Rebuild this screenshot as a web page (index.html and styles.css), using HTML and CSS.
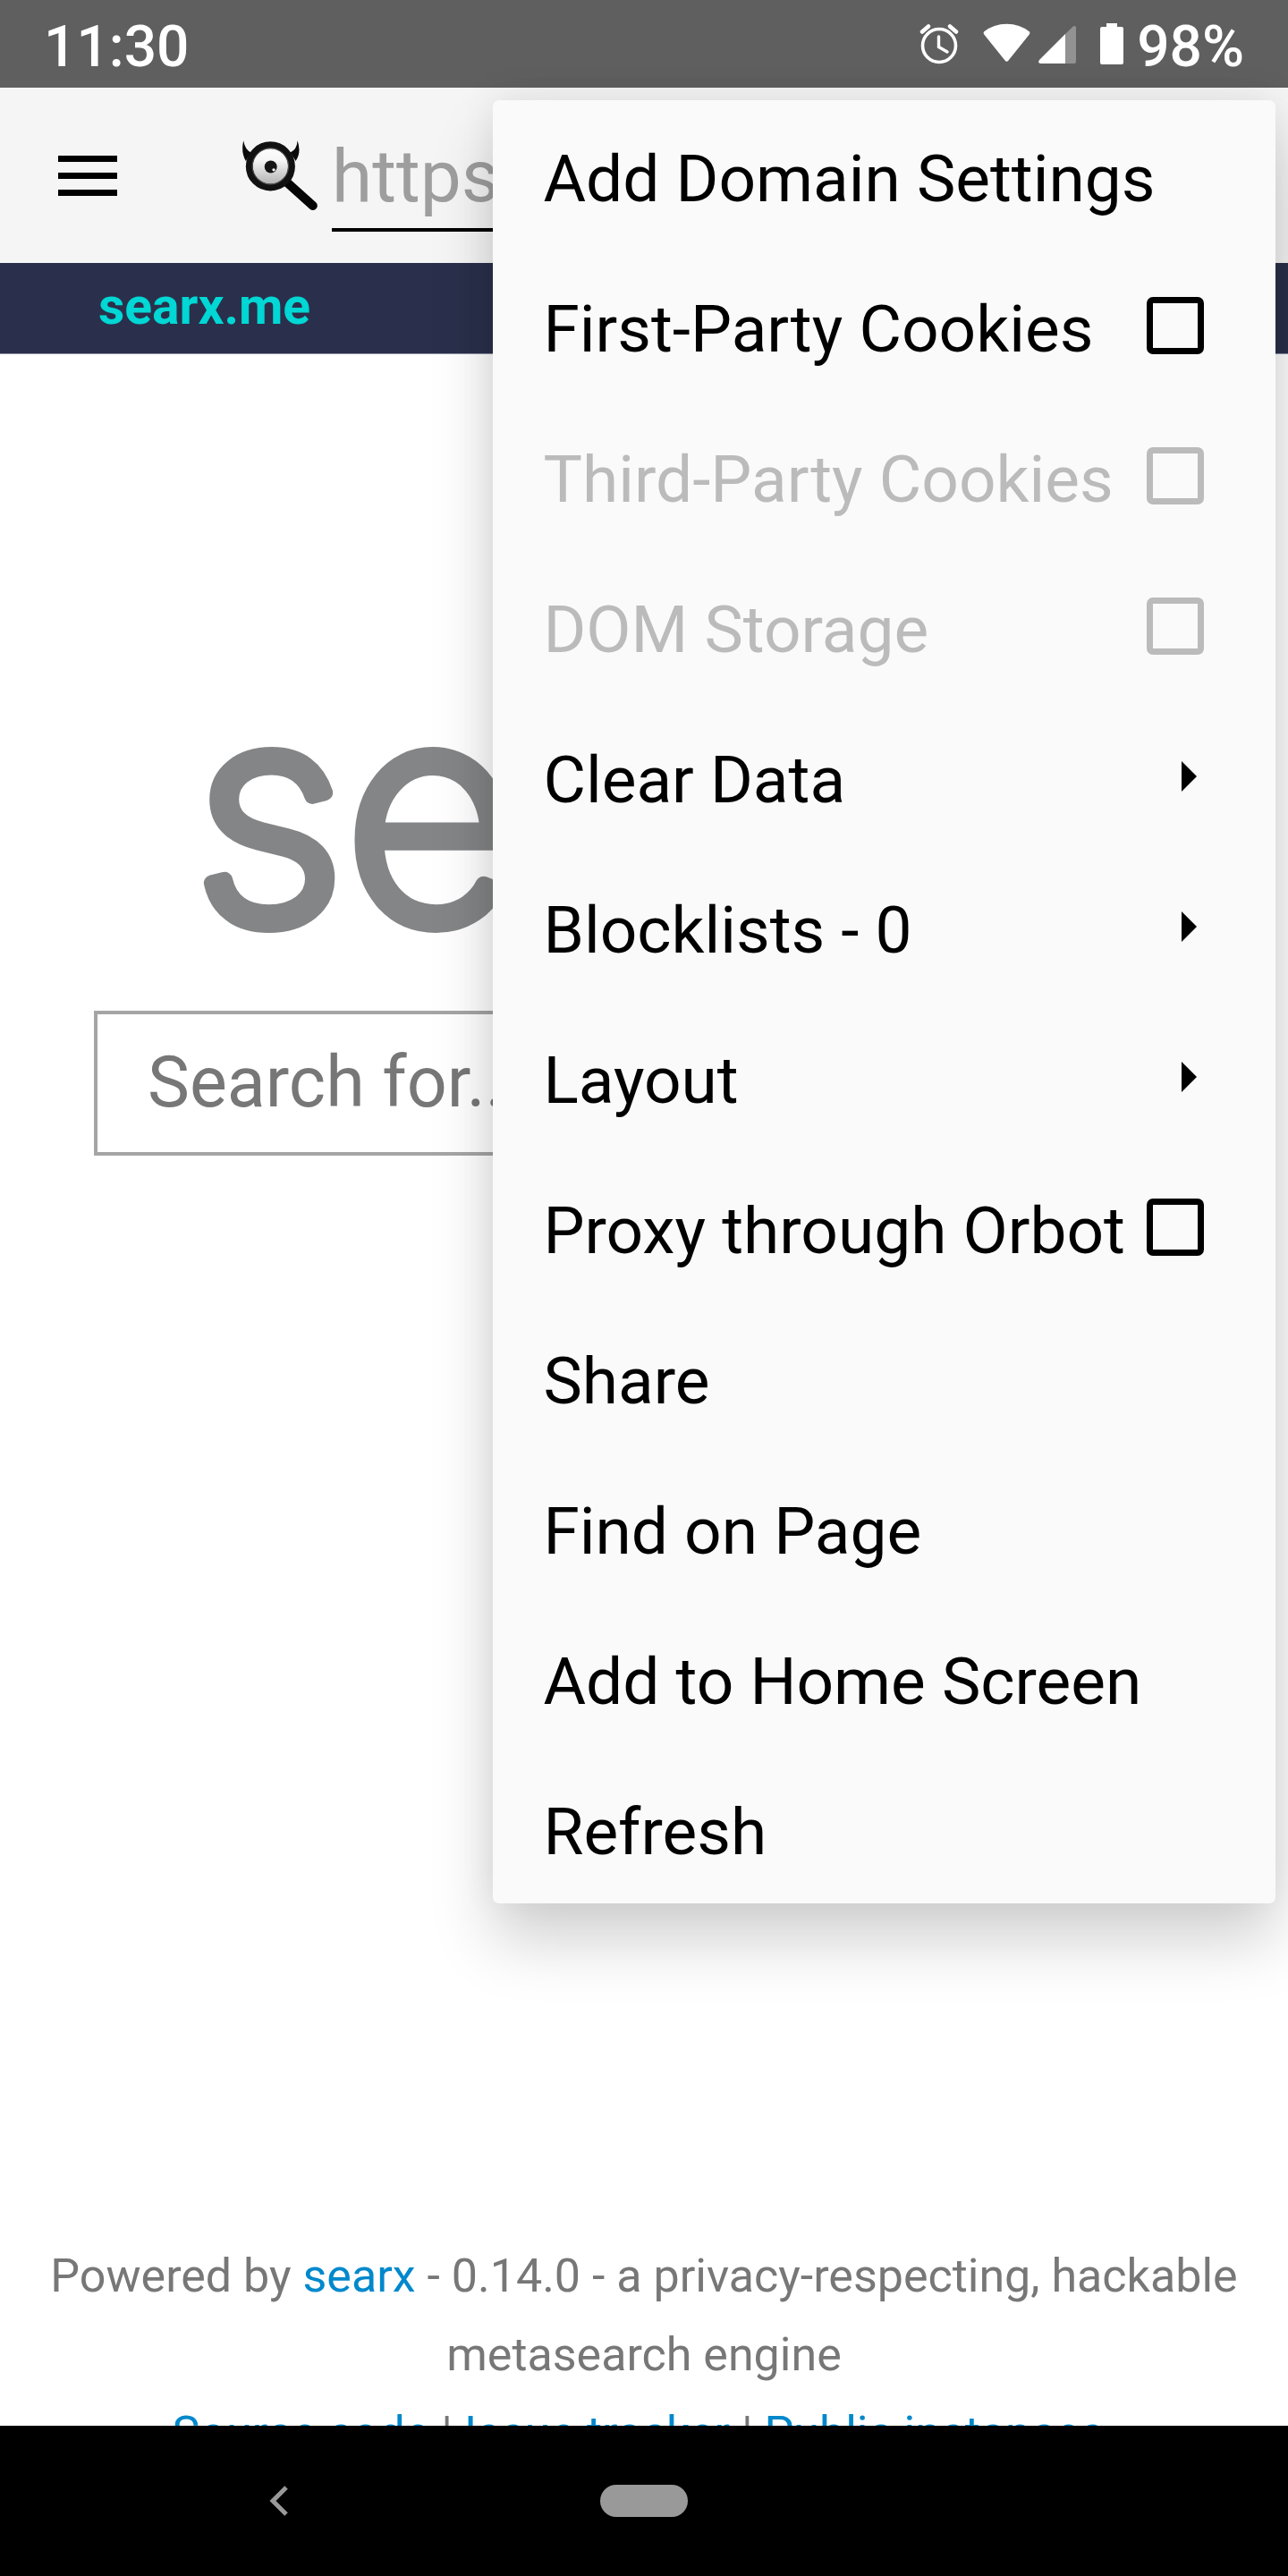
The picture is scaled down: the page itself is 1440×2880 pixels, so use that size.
FILE: index.html
```
<!DOCTYPE html>
<html lang="en">

<head>
    <meta charset="utf-8">
    <title>searx.me</title>
    <link rel="stylesheet" href="styles.css">
</head>

<body>
    <div class="status-bar">
        <span class="clock">11:30</span>
        <div class="status-icons">
            <svg class="alarm" width="44" height="46" viewBox="0 0 44 46" fill="none" stroke="#fff">
                <circle cx="22" cy="25" r="18.5" stroke-width="3.6" />
                <path d="M21.5 15v11.5l9.5 5.500" stroke-width="3.400" stroke-linecap="round" />
                <path d="M3 9.500L10 3.500M41 9.500L34 3.500" stroke-width="4.500" stroke-linecap="round" />
            </svg>
            <svg class="wifi" width="53" height="46" viewBox="0 0 53 46" fill="#fff">
                <path d="M1 9.500Q0 11 1.200 12.600L24.500 41.500Q26.500 44 28.500 41.500L51.800 12.600Q53 11 52 9.500Q41 .8 26.500 .8T1 9.500z" />
            </svg>
            <svg class="signal" width="42" height="46" viewBox="0 0 42 46" fill="#fff">
                <path opacity=".32" d="M30 12L38.800 3.600Q42 1.800 42 5V43q0 2-2 2H30z" />
                <path d="M30 12v33H2Q-1 44.500 1 41z" />
            </svg>
            <svg class="battery" width="26" height="46" viewBox="0 0 26 46" fill="#fff">
                <path d="M7 0h12v4h5q2 0 2 2v38q0 2-2 2H2q-2 0-2-2V6q0-2 2-2h5z" />
            </svg>
            <span class="percent">98%</span>
        </div>
    </div>

    <div class="app-bar">
        <button class="menu-btn" aria-label="Menu">
            <svg width="66" height="45" viewBox="0 0 66 45">
                <path d="M0 0h66v7H0zM0 19h66v7H0zM0 38h66v7H0z" />
            </svg>
        </button>
        <svg class="favicon" width="86" height="79" viewBox="60 55 258 238">
            <defs>
                <linearGradient id="lens" x1="0" y1="0" x2="0" y2="1">
                    <stop offset="0" stop-color="#fff" />
                    <stop offset=".35" stop-color="#f6f6f6" />
                    <stop offset="1" stop-color="#aaa" />
                </linearGradient>
            </defs>
            <path d="M66 56Q57 95 74 124L92 96Q72 88 66 56zM248 56Q262 95 242 124L224 96Q246 86 248 56z" fill="#0a0a0a" />
            <path d="M212 196L300 275" stroke="#050505" stroke-width="30" stroke-linecap="round" />
            <circle cx="157" cy="142" r="71" fill="url(#lens)" stroke="#111" stroke-width="24" />
            <circle cx="157" cy="142" r="61" fill="none" stroke="#555" stroke-width="3" />
            <circle cx="158" cy="144" r="21" fill="#151515" />
            <circle cx="168" cy="154" r="5" fill="#fff" />
        </svg>
        <input type="text" class="url" placeholder="https://" aria-label="URL">
    </div>

    <main>
        <nav class="site-nav"><a href="#">searx.me</a></nav>
        <svg class="logo" width="1000" height="260" viewBox="0 0 1000 260" role="img" aria-label="searx">
            <text x="-4" y="204">searx</text>
        </svg>
        <form class="search">
            <input type="text" placeholder="Search for..." aria-label="Search for...">
        </form>
        <footer>
            Powered by <a href="#">searx</a> - 0.14.0 - a privacy-respecting, hackable metasearch engine<br>
            <a href="#">Source code</a> | <a href="#">Issue tracker</a> | <a href="#">Public instances</a>&nbsp;
        </footer>
    </main>

    <div class="nav-bar">
        <button class="back" aria-label="Back">
            <svg width="22" height="36" viewBox="0 0 22 36">
                <path d="M19 3L4 18l15 15" fill="none" stroke="#999" stroke-width="5" />
            </svg>
        </button>
        <button class="home" aria-label="Home"></button>
    </div>

    <div class="popup">
        <button class="item"><span>Add Domain Settings</span></button>
        <label class="item"><span>First-Party Cookies</span><input type="checkbox"></label>
        <label class="item disabled"><span>Third-Party Cookies</span><input type="checkbox" disabled></label>
        <label class="item disabled"><span>DOM Storage</span><input type="checkbox" disabled></label>
        <button class="item submenu"><span>Clear Data</span></button>
        <button class="item submenu"><span>Blocklists - 0</span></button>
        <button class="item submenu"><span>Layout</span></button>
        <label class="item"><span>Proxy through Orbot</span><input type="checkbox"></label>
        <button class="item"><span>Share</span></button>
        <button class="item"><span>Find on Page</span></button>
        <button class="item"><span>Add to Home Screen</span></button>
        <button class="item"><span>Refresh</span></button>
    </div>
</body>

</html>
```
FILE: styles.css
```
* {
    box-sizing: border-box;
}

body {
    margin: 0;
    height: 100vh;
    display: flex;
    flex-direction: column;
    position: relative;
    overflow: hidden;
    background-color: #fff;
    font-family: Roboto, "Liberation Sans", sans-serif;
}

button {
    border: none;
    padding: 0;
    background: none;
    font-family: inherit;
}

svg {
    display: block;
}

a {
    text-decoration: none;
}

/* status bar */
.status-bar {
    display: flex;
    justify-content: space-between;
    align-items: center;
    height: 98px;
    flex-shrink: 0;
    padding: 0 49px;
    background-color: #5f5f5f;
    color: white;
    font-size: 64px;
    font-weight: 500;
}

.clock,
.percent {
    padding-top: 6px;
}

.status-icons {
    display: flex;
    align-items: center;
}

.wifi {
    margin-left: 27px;
}

.signal {
    margin-left: 9px;
}

.battery {
    margin: 0 15px 0 27px;
}

/* app bar */
.app-bar {
    display: flex;
    align-items: center;
    height: 196px;
    flex-shrink: 0;
    padding: 0 28px 0 65px;
    background-color: #f5f5f5;
}

.favicon {
    margin: 0 15px 0 139px;
}

.url {
    flex: 1;
    min-width: 0;
    height: 126px;
    padding: 6px 0 0;
    border: none;
    border-bottom: 4px solid #000;
    background: none;
    font-family: inherit;
    font-size: 82px;
}

.url::placeholder {
    color: #9e9e9e;
}

/* web page */
main {
    flex: 1;
    min-height: 0;
    overflow: hidden;
}

.site-nav {
    padding: 0 110px 4px;
    border-bottom: 1px solid #8a8fa3;
    background-color: #2a304b;
    font-size: 57px;
    line-height: 97px;
    font-weight: 700;
}

.site-nav a {
    color: #01d7d4;
}

.logo {
    margin: 430px auto 0;
}

.logo text {
    font-family: Inter, sans-serif;
    font-size: 336px;
    font-weight: 200;
    fill: #848587;
    stroke: #848587;
    stroke-width: 18px;
    stroke-linejoin: round;
}

.search {
    padding: 44px 105px 0;
}

.search input {
    display: block;
    width: 100%;
    height: 162px;
    padding: 0 56px 2px;
    border: 4px solid #a5a5a5;
    font-family: inherit;
    font-size: 79px;
}

.search input::placeholder {
    color: #777;
}

footer {
    margin-top: 1209px;
    padding: 0 40px;
    color: #777;
    font-size: 52px;
    line-height: 88px;
    text-align: center;
}

footer a {
    color: #0088cc;
}

/* android navigation */
.nav-bar {
    display: grid;
    grid-template-columns: 1fr 98px 1fr;
    align-items: center;
    height: 168px;
    flex-shrink: 0;
    background-color: #000;
}

.back {
    justify-self: center;
    margin-right: 48px;
}

.home {
    height: 36px;
    border-radius: 18px;
    background-color: #999;
}

/* overflow menu */
.popup {
    position: absolute;
    top: 112px;
    right: 14px;
    display: flex;
    flex-direction: column;
    border-radius: 7px;
    background-color: #fafafa;
    box-shadow: 0 42px 70px rgba(0, 0, 0, 0.18), 0 -6px 42px rgba(0, 0, 0, 0.07);
}

.item {
    display: flex;
    justify-content: space-between;
    align-items: center;
    gap: 24px;
    height: 168px;
    padding: 0 80px 0 56px;
    color: #000;
    font-size: 73px;
    white-space: nowrap;
}

.item span {
    padding-top: 8px;
}

.item input {
    appearance: none;
    width: 64px;
    height: 64px;
    margin: 0;
    border: 7px solid #000;
    border-radius: 7px;
}

.item.disabled {
    color: #bbb;
}

.item.disabled input {
    border-color: #bbb;
}

.submenu::after {
    content: "";
    margin-right: 8px;
    border: 17px solid transparent;
    border-left-color: #000;
    border-right-width: 0;
}
```
